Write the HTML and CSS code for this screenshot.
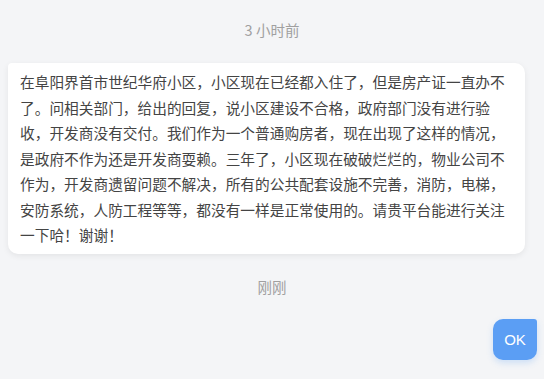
FILE: index.html
```html
<!DOCTYPE html>
<html lang="zh-CN">
<head>
<meta charset="utf-8">
<title>消息</title>
<link rel="stylesheet" href="styles.css">
</head>
<body>
<div class="chat">
  <div class="time time-first">3 小时前</div>
  <div class="bubble">在阜阳界首市世纪华府小区，小区现在已经都入住了，但是房产证一直办不了。问相关部门，给出的回复，说小区建设不合格，政府部门没有进行验收，开发商没有交付。我们作为一个普通购房者，现在出现了这样的情况，是政府不作为还是开发商耍赖。三年了，小区现在破破烂烂的，物业公司不作为，开发商遗留问题不解决，所有的公共配套设施不完善，消防，电梯，安防系统，人防工程等等，都没有一样是正常使用的。请贵平台能进行关注一下哈！谢谢！</div>
  <div class="time time-second">刚刚</div>
  <div class="reply-row">
    <div class="reply">OK</div>
  </div>
</div>
</body>
</html>
```

FILE: styles.css
```css
html, body {
  margin: 0;
  padding: 0;
  background: #f4f5f7;
}

body {
  font-family: "Noto Sans CJK SC", "Noto Sans", sans-serif;
  width: 544px;
  height: 379px;
  overflow: hidden;
}

.chat {
  display: flex;
  flex-direction: column;
}

.time {
  text-align: center;
  color: #a0a0a0;
  font-size: 14.5px;
  line-height: 20px;
  height: 20px;
}

.time-first {
  margin-top: 20px;
}

.bubble {
  margin: 23px 19px 0 8px;
  padding: 6px 12px;
  background: #ffffff;
  color: #444444;
  font-size: 14.7px;
  line-height: 25.5px;
  border-radius: 4px 10px 10px 10px;
  box-shadow: 0 2px 6px rgba(0, 0, 0, 0.07);
}

.time-second {
  margin-top: 23.5px;
}

.reply-row {
  display: flex;
  justify-content: flex-end;
  margin-top: 22px;
  padding-right: 7px;
}

.reply {
  width: 44px;
  height: 41px;
  display: flex;
  align-items: center;
  justify-content: center;
  background: #5b9ef4;
  color: #ffffff;
  font-family: "Liberation Sans", Arial, sans-serif;
  font-size: 15px;
  border-radius: 10px 3px 10px 10px;
  box-shadow: 0 3px 6px rgba(91, 158, 244, 0.25);
}
```
